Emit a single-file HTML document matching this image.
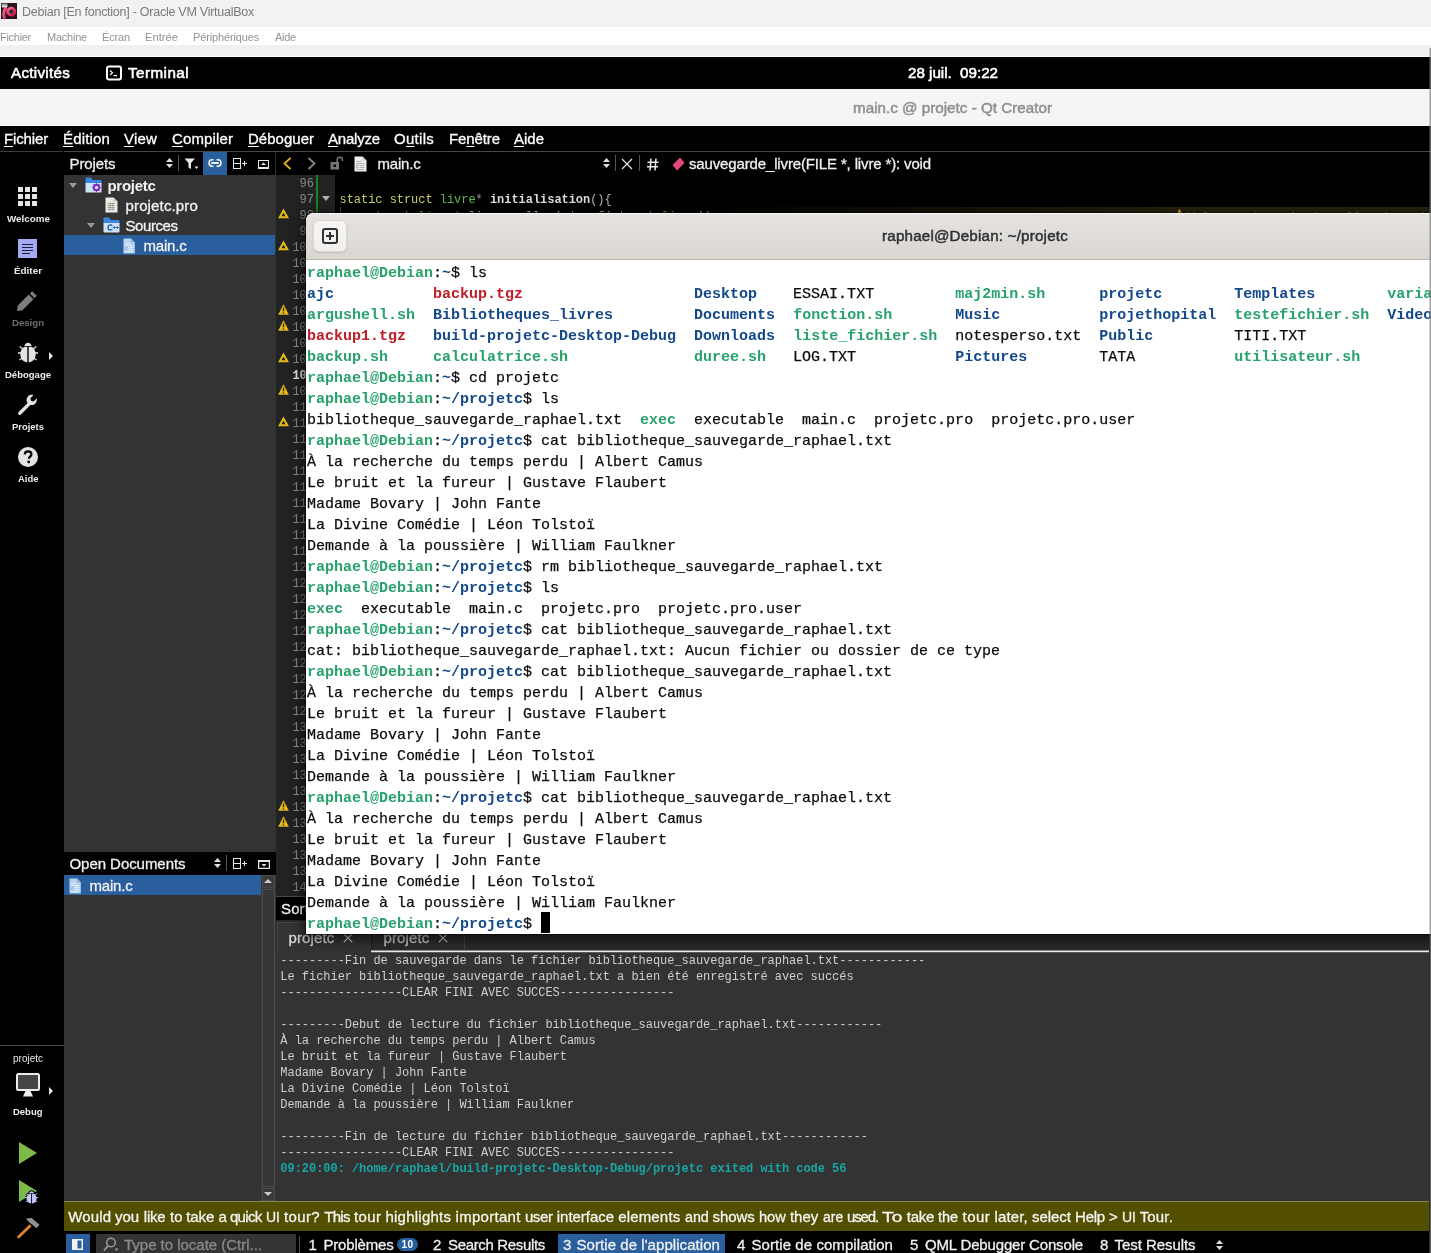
<!DOCTYPE html>
<html><head><meta charset="utf-8"><title>Debian [En fonction] - Oracle VM VirtualBox</title>
<style>
html,body{margin:0;padding:0;}
body{width:1431px;height:1253px;position:relative;overflow:hidden;background:#000;font-family:"Liberation Sans",sans-serif;}
#r{position:absolute;left:0;top:0;width:1431px;height:1253px;overflow:hidden;will-change:transform;}
#r div,#r svg,#r span.t,#r pre{position:absolute;}
span.t{white-space:pre;line-height:20px;height:20px;}
span.k{-webkit-text-stroke:0.3px;}
u{text-decoration:underline;text-underline-offset:2px;}
pre{margin:0;font-family:"Liberation Mono",monospace;white-space:pre;}
b{font-weight:bold;}
.g{color:#28a16c;font-weight:bold;-webkit-text-stroke:0;}
.b{color:#13488a;font-weight:bold;-webkit-text-stroke:0;}
.rd{color:#c01c28;font-weight:bold;-webkit-text-stroke:0;}
</style></head><body><div id="r">
<div style="left:0px;top:0px;width:1431px;height:27px;background:#f2f2f2;"></div>
<div style="left:0px;top:27px;width:1431px;height:18px;background:#ffffff;"></div>
<div style="left:0px;top:45px;width:1431px;height:11px;background:#f0f0f0;"></div>
<div style="left:0px;top:56px;width:1431px;height:1px;background:#ffffff;"></div>
<div style="left:0px;top:57px;width:1431px;height:32px;background:#000000;"></div>
<div style="left:0px;top:89px;width:1431px;height:37px;background:#f6f5f4;"></div>
<div style="left:0px;top:126px;width:1431px;height:1127px;background:#000000;"></div>
<svg style="left:1px;top:3px" width="16" height="16" viewBox="0 0 16 16">
<defs><linearGradient id="vb" x1="0" y1="0" x2="1" y2="1"><stop offset="0" stop-color="#f0708a"/><stop offset="1" stop-color="#d01048"/></linearGradient></defs>
<rect x="0" y="0" width="16" height="16" fill="#2a1420"/>
<path d="M5.500 4.500C2.500 7 2.200 12 3.800 15.500" fill="none" stroke="url(#vb)" stroke-width="3"/>
<circle cx="10.300" cy="8.600" r="3.500" fill="none" stroke="url(#vb)" stroke-width="2.800"/>
<circle cx="10.300" cy="8.600" r="1.600" fill="#3a2a40"/>
<rect x="0.800" y="0.800" width="5.500" height="3.600" fill="#e8e8e8"/><rect x="0.800" y="0.800" width="5.500" height="2" fill="#8a8a8a" opacity=".7"/>
</svg>
<span class="t" style="left:22px;top:2.0px;font-size:12.5px;color:#7a7a7a;letter-spacing:-0.255px;">Debian [En fonction] - Oracle VM VirtualBox</span>
<span class="t" style="left:0px;top:26.5px;font-size:11px;color:#939393;letter-spacing:-0.288px;">Fichier</span>
<span class="t" style="left:47px;top:26.5px;font-size:11px;color:#939393;letter-spacing:-0.225px;">Machine</span>
<span class="t" style="left:102px;top:26.5px;font-size:11px;color:#939393;letter-spacing:-0.150px;">Écran</span>
<span class="t" style="left:145px;top:26.5px;font-size:11px;color:#939393;letter-spacing:0.096px;">Entrée</span>
<span class="t" style="left:193px;top:26.5px;font-size:11px;color:#939393;letter-spacing:-0.144px;">Périphériques</span>
<span class="t" style="left:275px;top:26.5px;font-size:11px;color:#939393;letter-spacing:-0.258px;">Aide</span>
<span class="t" style="left:11px;top:62.5px;font-size:15.2px;color:#ffffff;letter-spacing:0.273px;-webkit-text-stroke:0.55px;">Activités</span>
<svg style="left:106px;top:65px" width="16" height="16" viewBox="0 0 16 16">
<rect x="1" y="1.500" width="14" height="13" rx="2" fill="none" stroke="#fff" stroke-width="2"/>
<path d="M4 5.500l2.500 2.300L4 10.100" fill="none" stroke="#fff" stroke-width="1.200"/><rect x="7.500" y="10" width="3.500" height="1.200" fill="#fff"/></svg>
<span class="t" style="left:128px;top:62.5px;font-size:15.2px;color:#ffffff;letter-spacing:0.451px;-webkit-text-stroke:0.55px;">Terminal</span>
<span class="t" style="left:908px;top:62.5px;font-size:15.2px;color:#ffffff;letter-spacing:-0.024px;-webkit-text-stroke:0.55px;">28 juil.  09:22</span>
<span class="t" style="left:853px;top:97.5px;font-size:15.2px;color:#909090;letter-spacing:0.015px;-webkit-text-stroke:0.5px;">main.c @ projetc - Qt Creator</span>
<span class="t k" style="left:4px;top:128.5px;font-size:15px;color:#ffffff;letter-spacing:-0.145px;"><u>F</u>ichier</span>
<span class="t k" style="left:63px;top:128.5px;font-size:15px;color:#ffffff;letter-spacing:0.161px;"><u>É</u>dition</span>
<span class="t k" style="left:124px;top:128.5px;font-size:15px;color:#ffffff;letter-spacing:0.188px;"><u>V</u>iew</span>
<span class="t k" style="left:172px;top:128.5px;font-size:15px;color:#ffffff;letter-spacing:0.123px;"><u>C</u>ompiler</span>
<span class="t k" style="left:248px;top:128.5px;font-size:15px;color:#ffffff;letter-spacing:0.014px;"><u>D</u>éboguer</span>
<span class="t k" style="left:328px;top:128.5px;font-size:15px;color:#ffffff;letter-spacing:-0.196px;"><u>A</u>nalyze</span>
<span class="t k" style="left:394px;top:128.5px;font-size:15px;color:#ffffff;letter-spacing:0.276px;">O<u>u</u>tils</span>
<span class="t k" style="left:449px;top:128.5px;font-size:15px;color:#ffffff;letter-spacing:-0.100px;">Fe<u>n</u>être</span>
<span class="t k" style="left:514px;top:128.5px;font-size:15px;color:#ffffff;letter-spacing:-0.008px;"><u>A</u>ide</span>
<svg style="left:18px;top:187px" width="19" height="19" viewBox="0 0 19 19"><rect x="0" y="0" width="5" height="5" fill="#e4e4e4"/><rect x="7" y="0" width="5" height="5" fill="#e4e4e4"/><rect x="14" y="0" width="5" height="5" fill="#e4e4e4"/><rect x="0" y="7" width="5" height="5" fill="#e4e4e4"/><rect x="7" y="7" width="5" height="5" fill="#e4e4e4"/><rect x="14" y="7" width="5" height="5" fill="#e4e4e4"/><rect x="0" y="14" width="5" height="5" fill="#e4e4e4"/><rect x="7" y="14" width="5" height="5" fill="#e4e4e4"/><rect x="14" y="14" width="5" height="5" fill="#e4e4e4"/></svg>
<span class="t" style="left:6.5px;top:209.3px;font-size:9.5px;color:#ececec;font-weight:bold;display:inline-block;transform-origin:0 50%;transform:scaleX(1.0350);">Welcome</span>
<svg style="left:18px;top:239px" width="19" height="19" viewBox="0 0 19 19"><rect width="19" height="19" fill="#a3aaf2"/>
<path d="M4 5.500h11M4 8.500h11M4 11.500h11M4 14.500h8" stroke="#1d1d3a" stroke-width="1.200" fill="none"/></svg>
<span class="t" style="left:14px;top:260.8px;font-size:9.5px;color:#ececec;font-weight:bold;display:inline-block;transform-origin:0 50%;transform:scaleX(1.0394);">Éditer</span>
<svg style="left:16px;top:290px" width="22" height="22" viewBox="0 0 22 22">
<path d="M16.2 1.200l4.600 4.600-2.400 2.400-4.600-4.600zM12.800 4.600l4.600 4.600L6.200 20.400 1 21l.6-5.200z" fill="#7d7d7d"/></svg>
<span class="t" style="left:12px;top:313.3px;font-size:9.5px;color:#6f6f6f;font-weight:bold;display:inline-block;transform-origin:0 50%;transform:scaleX(1.0099);">Design</span>
<svg style="left:16px;top:341px" width="24" height="22" viewBox="0 0 24 22">
<g stroke="#e4e4e4" stroke-width="1.300" fill="none"><path d="M3.500 5.500l3.500 2.500M20.500 5.500l-3.500 2.500M2 12h4M22 12h-4M3.500 19l3.500-2.500M20.500 19l-3.500-2.500"/></g>
<path d="M8.300 5c.4-2 1.900-3.300 3.700-3.300s3.300 1.300 3.700 3.300z" fill="#e4e4e4"/>
<path d="M11.300 5.800v15.600c-4.200-.5-7-3.600-7-8.100 0-3.300 1.600-6 4.200-7.500zM12.700 5.800v15.600c4.200-.5 7-3.600 7-8.100 0-3.300-1.600-6-4.200-7.500z" fill="#e4e4e4"/></svg>
<svg style="left:49px;top:352px" width="4" height="8" viewBox="0 0 4 8"><path d="M0 0l4 4-4 4z" fill="#e4e4e4"/></svg>
<span class="t" style="left:5px;top:365.3px;font-size:9.5px;color:#ececec;font-weight:bold;display:inline-block;transform-origin:0 50%;transform:scaleX(1.0014);">Débogage</span>
<svg style="left:17px;top:394px" width="22" height="22" viewBox="0 0 22 22">
<path d="M2.800 19.200L12.600 9.400" stroke="#e4e4e4" stroke-width="3.400" stroke-linecap="round" fill="none"/>
<path d="M19.800 4.300l-3.200 3.100-2.600-.6-.6-2.600 3.100-3.200c-2.200-.5-4.500.1-5.800 1.700-1.700 2-1.500 5 .3 6.900 1.900 1.900 4.900 2 6.900.3 1.600-1.300 2.400-3.500 1.900-5.600z" fill="#e4e4e4"/></svg>
<span class="t" style="left:12px;top:417.3px;font-size:9.5px;color:#ececec;font-weight:bold;display:inline-block;transform-origin:0 50%;transform:scaleX(0.9932);">Projets</span>
<svg style="left:18px;top:447px" width="20" height="20" viewBox="0 0 20 20"><circle cx="10" cy="10" r="10" fill="#e4e4e4"/>
<path d="M6.800 7.600c0-2 1.400-3.200 3.300-3.200 1.900 0 3.300 1.100 3.300 2.800 0 2.400-2.600 2.500-2.600 4.600" stroke="#000" stroke-width="2.200" fill="none"/><circle cx="10.700" cy="14.900" r="1.400" fill="#000"/></svg>
<span class="t" style="left:17.5px;top:469.3px;font-size:9.5px;color:#ececec;font-weight:bold;display:inline-block;transform-origin:0 50%;transform:scaleX(0.9954);">Aide</span>
<div style="left:0px;top:1045px;width:64px;height:1px;background:#4a4a4a;"></div>
<span class="t" style="left:12.5px;top:1048.7px;font-size:10px;color:#e8e8e8;display:inline-block;transform-origin:0 50%;transform:scaleX(0.9995);">projetc</span>
<svg style="left:16px;top:1073px" width="24" height="24" viewBox="0 0 24 24">
<rect x="1" y="1" width="22" height="16" rx="1.500" fill="#454545" stroke="#ececec" stroke-width="2"/>
<path d="M9.500 18h5l2.500 5.500h-10z" fill="#ececec"/></svg>
<svg style="left:49px;top:1087px" width="4" height="8" viewBox="0 0 4 8"><path d="M0 0l4 4-4 4z" fill="#e4e4e4"/></svg>
<span class="t" style="left:13px;top:1101.8px;font-size:9.5px;color:#ececec;font-weight:bold;display:inline-block;transform-origin:0 50%;transform:scaleX(0.9979);">Debug</span>
<svg style="left:19px;top:1142px" width="18" height="22" viewBox="0 0 18 22"><path d="M0 0l18 11L0 22z" fill="#7dba4a"/></svg>
<svg style="left:19px;top:1180px" width="20" height="24" viewBox="0 0 20 24"><path d="M0 0l18 11L0 22z" fill="#7dba4a"/>
<g transform="translate(4.800,10.200) scale(0.650,0.620)"><g stroke="#000" stroke-width="3.500" fill="#000"><path d="M3.500 5.500l3.500 2.500M20.500 5.500l-3.500 2.500M2 12h4M22 12h-4M3.500 19l3.500-2.500M20.500 19l-3.500-2.500"/><path d="M8.300 5c.4-2 1.900-3.300 3.700-3.300s3.300 1.300 3.700 3.300zM5 13a7 8 0 0 0 14 0a7 8 0 0 0-14 0z"/></g>
<g stroke="#c0c8ff" stroke-width="1.500" fill="none"><path d="M3.500 5.500l3.500 2.500M20.500 5.500l-3.500 2.500M2 12h4M22 12h-4M3.500 19l3.500-2.500M20.500 19l-3.500-2.500"/></g>
<path d="M8.300 5c.4-2 1.900-3.300 3.700-3.300s3.300 1.300 3.700 3.300z" fill="#c0c8ff"/>
<path d="M11.300 5.800v15.600c-4.200-.5-7-3.600-7-8.100 0-3.300 1.600-6 4.200-7.500zM12.700 5.800v15.600c4.200-.5 7-3.600 7-8.100 0-3.300-1.600-6-4.200-7.500z" fill="#c0c8ff"/></g></svg>
<svg style="left:16px;top:1216px" width="26" height="26" viewBox="0 0 26 26">
<path d="M1.800 21.800L14.600 9.300" stroke="#e8872c" stroke-width="2.600" fill="none"/>
<path d="M9.900 2.600L15.600 1.900L23.500 8.800L20.600 12.200L12.700 5.800z" fill="#929292"/></svg>
<div style="left:0px;top:151px;width:63px;height:1px;background:#3a3a3a;"></div>
<div style="left:64px;top:151px;width:1367px;height:1px;background:#464646;"></div>
<div style="left:64px;top:175px;width:212px;height:677px;background:#333333;"></div>
<div style="left:64px;top:875px;width:212px;height:326px;background:#333333;"></div>
<span class="t k" style="left:69.5px;top:153.5px;font-size:15px;color:#f0f0f0;letter-spacing:-0.098px;">Projets</span>
<svg style="left:166px;top:158px" width="7" height="10" viewBox="0 0 7 10"><path d="M3.500 0L7 4H0zM3.500 10L7 6H0z" fill="#e0e0e0"/></svg>
<div style="left:178px;top:155px;width:1px;height:16px;background:#555555;"></div>
<svg style="left:184px;top:158px" width="15" height="12" viewBox="0 0 15 12"><path d="M0.500 0.500h10.500L7 5v6L4.500 9.500V5z" fill="#e8e8e8"/><path d="M10.500 8.500h4l-2 2.500z" fill="#e8e8e8"/></svg>
<div style="left:203px;top:152px;width:24px;height:23px;background:#2a5f9e;"></div>
<svg style="left:208px;top:159px" width="14" height="8" viewBox="0 0 14 8"><g fill="none" stroke="#f2f2f2">
<path d="M5.500 0.800H4.200a3.200 3.200 0 0 0 0 6.400H5.500M8.500 0.800H9.800a3.200 3.200 0 0 1 0 6.400H8.500" stroke-width="1.500"/><path d="M3.300 4h7.400" stroke-width="2"/></g></svg>
<svg style="left:233px;top:158px" width="15" height="12" viewBox="0 0 15 12"><g fill="none" stroke="#e8e8e8" stroke-width="1">
<rect x="0.500" y="0.500" width="7" height="10"/><path d="M0.500 5.500h7M11.500 3v5M9 5.500h5"/></g></svg>
<svg style="left:258px;top:160px" width="11" height="9" viewBox="0 0 11 9"><rect x="0.500" y="0.500" width="10" height="8" fill="none" stroke="#e8e8e8" stroke-width="1"/><rect x="0" y="7" width="11" height="2" fill="#e8e8e8"/><path d="M3 5l2.500-2.500L8 5z" fill="#e8e8e8"/></svg>
<div style="left:275px;top:152px;width:1px;height:23px;background:#2e2e2e;"></div>
<svg style="left:69px;top:183px" width="8" height="5" viewBox="0 0 8 5"><path d="M0 0h8L4 5z" fill="#9a9a9a"/></svg>
<svg style="left:85px;top:177px" width="17" height="16" viewBox="0 0 17 16">
<path d="M0.500 1.500c0-.6.400-1 1-1h4.500l1.500 2.500h8c.6 0 1 .4 1 1V7H0.500z" fill="#3d86e0"/>
<path d="M0.500 6h16v8.500c0 .6-.4 1-1 1h-14c-.6 0-1-.4-1-1z" fill="#cfe3f7"/>
<circle cx="11.500" cy="10.500" r="2.600" fill="none" stroke="#7a18c2" stroke-width="1.600"/>
<g stroke="#7a18c2" stroke-width="1.300"><path d="M11.500 6.300v1.400M11.500 13.300v1.400M7.300 10.500h1.400M14.300 10.500h1.400M8.500 7.500l1 1M13.500 12.500l1 1M14.500 7.500l-1 1M8.500 13.500l1-1"/></g></svg>
<span class="t" style="left:107.5px;top:176.0px;font-size:15px;color:#f2f2f2;font-weight:bold;letter-spacing:-0.288px;">projetc</span>
<svg style="left:105px;top:197px" width="13" height="16" viewBox="0 0 13 16">
<path d="M0.500 0.500h8l4 4v11h-12z" fill="#ecebe6"/><path d="M8.500 0.500v4h4z" fill="#c9c8c2"/>
<g stroke="#9a9a94" stroke-width="0.900" fill="none"><path d="M2.500 6.500h7M2.500 8.500h7M2.500 10.500h7M2.500 12.500h7M5 5.500v8M8 5.500v8"/></g></svg>
<span class="t k" style="left:125.5px;top:196.0px;font-size:15px;color:#f2f2f2;letter-spacing:0.148px;">projetc.pro</span>
<svg style="left:87px;top:223px" width="8" height="5" viewBox="0 0 8 5"><path d="M0 0h8L4 5z" fill="#9a9a9a"/></svg>
<svg style="left:103px;top:217px" width="17" height="16" viewBox="0 0 17 16">
<path d="M0.500 1.500c0-.6.400-1 1-1h4.500l1.500 2.500h8c.6 0 1 .4 1 1V7H0.500z" fill="#3d86e0"/>
<path d="M0.500 6h16v8.500c0 .6-.4 1-1 1h-14c-.6 0-1-.4-1-1z" fill="#cfe3f7"/>
<path d="M9.300 8.800c-.5-.6-1.100-.9-1.900-.9-1.400 0-2.400 1-2.400 2.600s1 2.600 2.400 2.600c.8 0 1.400-.3 1.900-.9" fill="none" stroke="#1b5fae" stroke-width="1.300"/>
<path d="M10 10.500h2.600M11.300 9.200v2.600M13.100 10.500h2.600M14.400 9.200v2.600" stroke="#1b5fae" stroke-width="1"/></svg>
<span class="t k" style="left:125.5px;top:216.0px;font-size:15px;color:#f2f2f2;letter-spacing:-0.433px;">Sources</span>
<div style="left:64px;top:235px;width:211px;height:20px;background:#2a5f9e;"></div>
<svg style="left:123px;top:237.5px" width="12.300" height="16" viewBox="0 0 13 16" preserveAspectRatio="none">
<path d="M0.500 0.500h8l4 4v11h-12z" fill="#b9d2ee"/><path d="M8.500 0.500v4h4z" fill="#8fb2da"/>
<g stroke="#dcebfa" stroke-width="1" fill="none"><path d="M2.500 5.500h5M2.500 7.500h8M5.500 9.500h5M5.500 11.500h5M2.500 13.500h8"/></g>
<path d="M4.600 9.300c-.3-.3-.6-.4-1-.4-.7 0-1.200.6-1.200 1.500s.5 1.500 1.200 1.500c.4 0 .7-.1 1-.4" stroke="#7fa6d6" stroke-width="0.900" fill="none"/></svg>
<span class="t k" style="left:143.5px;top:236.0px;font-size:15px;color:#f2f2f2;letter-spacing:-0.198px;">main.c</span>
<div style="left:64px;top:852px;width:211px;height:23px;background:#000000;"></div>
<span class="t k" style="left:69.5px;top:853.5px;font-size:15px;color:#f0f0f0;letter-spacing:-0.052px;">Open Documents</span>
<svg style="left:214px;top:858px" width="7" height="10" viewBox="0 0 7 10"><path d="M3.500 0L7 4H0zM3.500 10L7 6H0z" fill="#e0e0e0"/></svg>
<div style="left:226px;top:855px;width:1px;height:16px;background:#555555;"></div>
<svg style="left:233px;top:858px" width="15" height="12" viewBox="0 0 15 12"><g fill="none" stroke="#e8e8e8" stroke-width="1">
<rect x="0.500" y="0.500" width="7" height="10"/><path d="M0.500 5.500h7M11.500 3v5M9 5.500h5"/></g></svg>
<svg style="left:258px;top:860px" width="12" height="9" viewBox="0 0 12 9"><rect x="0.600" y="0.600" width="10.800" height="7.800" fill="none" stroke="#e8e8e8" stroke-width="1.200"/><rect x="0" y="0" width="12" height="2" fill="#e8e8e8"/><path d="M3.500 4l2.500 2.500 2.500-2.500z" fill="#e8e8e8"/></svg>
<div style="left:64px;top:875px;width:197px;height:20px;background:#2a5f9e;"></div>
<svg style="left:69px;top:877.5px" width="12.300" height="16" viewBox="0 0 13 16" preserveAspectRatio="none">
<path d="M0.500 0.500h8l4 4v11h-12z" fill="#b9d2ee"/><path d="M8.500 0.500v4h4z" fill="#8fb2da"/>
<g stroke="#dcebfa" stroke-width="1" fill="none"><path d="M2.500 5.500h5M2.500 7.500h8M5.500 9.500h5M5.500 11.500h5M2.500 13.500h8"/></g>
<path d="M4.600 9.300c-.3-.3-.6-.4-1-.4-.7 0-1.200.6-1.200 1.500s.5 1.500 1.200 1.500c.4 0 .7-.1 1-.4" stroke="#7fa6d6" stroke-width="0.900" fill="none"/></svg>
<span class="t k" style="left:89.5px;top:876.0px;font-size:15px;color:#f2f2f2;letter-spacing:-0.198px;">main.c</span>
<div style="left:261px;top:875px;width:14px;height:326px;background:#383838;"></div>
<div style="left:262px;top:875px;width:13px;height:13px;background:#3a3a3a;border:1px solid #4a4a4a;box-sizing:border-box;"></div>
<div style="left:262px;top:889px;width:13px;height:298px;background:#363636;border:1px solid #4c4c4c;box-sizing:border-box;"></div>
<div style="left:262px;top:1188px;width:13px;height:13px;background:#3a3a3a;border:1px solid #4a4a4a;box-sizing:border-box;"></div>
<svg style="left:264px;top:879px" width="8" height="4" viewBox="0 0 8 4"><path d="M0 4h8L4 0z" fill="#c8c8c8"/></svg>
<svg style="left:264px;top:1192px" width="8" height="4" viewBox="0 0 8 4"><path d="M0 0h8L4 4z" fill="#c8c8c8"/></svg>
<svg style="left:283px;top:157px" width="9" height="13" viewBox="0 0 9 13"><path d="M7.500 1L1.500 6.500l6 5.500" fill="none" stroke="#e6b422" stroke-width="1.700"/></svg>
<svg style="left:307px;top:157px" width="9" height="13" viewBox="0 0 9 13"><path d="M1.500 1l6 5.500-6 5.500" fill="none" stroke="#8a8a8a" stroke-width="1.700"/></svg>
<svg style="left:330px;top:156px" width="14" height="14" viewBox="0 0 14 14"><rect x="0.500" y="6" width="8.500" height="7.500" fill="#777"/>
<path d="M7.200 6V3.800a2.600 2.600 0 0 1 5.200 0V5" fill="none" stroke="#777" stroke-width="1.500"/><rect x="3.500" y="8.500" width="2.500" height="2.500" fill="#000"/></svg>
<svg style="left:353.500px;top:155.500px" width="13" height="16" viewBox="0 0 13 16">
<path d="M0.500 0.500h8l4 4v11h-12z" fill="#f0f0f0"/><path d="M8.500 0.500v4h4z" fill="#c8c8c8"/>
<g stroke="#b0b0b0" stroke-width="1" fill="none"><path d="M2.500 5.500h5M2.500 7.500h8M5.500 9.500h5M5.500 11.500h5M2.500 13.500h8"/></g>
<path d="M4.600 9.300c-.3-.3-.6-.4-1-.4-.7 0-1.200.6-1.200 1.500s.5 1.500 1.200 1.500c.4 0 .7-.1 1-.4" stroke="#888" stroke-width="0.900" fill="none"/></svg>
<span class="t k" style="left:377.5px;top:153.5px;font-size:15px;color:#f0f0f0;letter-spacing:-0.198px;">main.c</span>
<svg style="left:603px;top:158px" width="7" height="10" viewBox="0 0 7 10"><path d="M3.500 0L7 4H0zM3.500 10L7 6H0z" fill="#e0e0e0"/></svg>
<div style="left:615px;top:155px;width:1px;height:16px;background:#555555;"></div>
<svg style="left:621px;top:158px" width="12" height="12" viewBox="0 0 12 12"><path d="M1 1l10 10M11 1L1 11" stroke="#e0e0e0" stroke-width="1.300"/></svg>
<div style="left:639px;top:155px;width:1px;height:16px;background:#555555;"></div>
<svg style="left:647px;top:157.500px" width="12" height="13" viewBox="0 0 12 13"><path d="M4 0.500L3 12.500M9 0.500L8 12.500M0.500 4.200h11M0 8.800h11" stroke="#e8e8e8" stroke-width="1.500" fill="none"/></svg>
<svg style="left:672px;top:157px" width="13" height="14" viewBox="0 0 13 14"><path d="M8 0.500l4.500 5.500-7.500 7.500L0.500 8z" fill="#df4a7e"/></svg>
<span class="t k" style="left:689px;top:153.5px;font-size:15px;color:#f0f0f0;letter-spacing:-0.144px;">sauvegarde_livre(FILE *, livre *): void</span>
<div style="left:276px;top:175px;width:59px;height:721px;background:#222222;"></div>
<div style="left:276px;top:896px;width:1153px;height:1px;background:#4a4a4a;"></div>
<div style="left:316px;top:175px;width:2px;height:722px;background:#148a14;"></div>
<span class="t" style="left:299.6px;top:173.5px;font-size:12px;color:#868686;font-family:'Liberation Mono',monospace;">96</span>
<span class="t" style="left:299.6px;top:189.5px;font-size:12px;color:#868686;font-family:'Liberation Mono',monospace;">97</span>
<span class="t" style="left:299.6px;top:205.5px;font-size:12px;color:#868686;font-family:'Liberation Mono',monospace;">98</span>
<span class="t" style="left:299.6px;top:221.5px;font-size:12px;color:#868686;font-family:'Liberation Mono',monospace;">99</span>
<span class="t" style="left:292.4px;top:237.5px;font-size:12px;color:#868686;font-family:'Liberation Mono',monospace;">100</span>
<span class="t" style="left:292.4px;top:253.5px;font-size:12px;color:#868686;font-family:'Liberation Mono',monospace;">101</span>
<span class="t" style="left:292.4px;top:269.5px;font-size:12px;color:#868686;font-family:'Liberation Mono',monospace;">102</span>
<span class="t" style="left:292.4px;top:285.5px;font-size:12px;color:#868686;font-family:'Liberation Mono',monospace;">103</span>
<span class="t" style="left:292.4px;top:301.5px;font-size:12px;color:#868686;font-family:'Liberation Mono',monospace;">104</span>
<span class="t" style="left:292.4px;top:317.5px;font-size:12px;color:#868686;font-family:'Liberation Mono',monospace;">105</span>
<span class="t" style="left:292.4px;top:333.5px;font-size:12px;color:#868686;font-family:'Liberation Mono',monospace;">106</span>
<span class="t" style="left:292.4px;top:349.5px;font-size:12px;color:#868686;font-family:'Liberation Mono',monospace;">107</span>
<span class="t" style="left:292.4px;top:365.5px;font-size:12px;color:#e0e0e0;font-weight:bold;font-family:'Liberation Mono',monospace;">108</span>
<span class="t" style="left:292.4px;top:381.5px;font-size:12px;color:#868686;font-family:'Liberation Mono',monospace;">109</span>
<span class="t" style="left:292.4px;top:397.5px;font-size:12px;color:#868686;font-family:'Liberation Mono',monospace;">110</span>
<span class="t" style="left:292.4px;top:413.5px;font-size:12px;color:#868686;font-family:'Liberation Mono',monospace;">111</span>
<span class="t" style="left:292.4px;top:429.5px;font-size:12px;color:#868686;font-family:'Liberation Mono',monospace;">112</span>
<span class="t" style="left:292.4px;top:445.5px;font-size:12px;color:#868686;font-family:'Liberation Mono',monospace;">113</span>
<span class="t" style="left:292.4px;top:461.5px;font-size:12px;color:#868686;font-family:'Liberation Mono',monospace;">114</span>
<span class="t" style="left:292.4px;top:477.5px;font-size:12px;color:#868686;font-family:'Liberation Mono',monospace;">115</span>
<span class="t" style="left:292.4px;top:493.5px;font-size:12px;color:#868686;font-family:'Liberation Mono',monospace;">116</span>
<span class="t" style="left:292.4px;top:509.5px;font-size:12px;color:#868686;font-family:'Liberation Mono',monospace;">117</span>
<span class="t" style="left:292.4px;top:525.5px;font-size:12px;color:#868686;font-family:'Liberation Mono',monospace;">118</span>
<span class="t" style="left:292.4px;top:541.5px;font-size:12px;color:#868686;font-family:'Liberation Mono',monospace;">119</span>
<span class="t" style="left:292.4px;top:557.5px;font-size:12px;color:#868686;font-family:'Liberation Mono',monospace;">120</span>
<span class="t" style="left:292.4px;top:573.5px;font-size:12px;color:#868686;font-family:'Liberation Mono',monospace;">121</span>
<span class="t" style="left:292.4px;top:589.5px;font-size:12px;color:#868686;font-family:'Liberation Mono',monospace;">122</span>
<span class="t" style="left:292.4px;top:605.5px;font-size:12px;color:#868686;font-family:'Liberation Mono',monospace;">123</span>
<span class="t" style="left:292.4px;top:621.5px;font-size:12px;color:#868686;font-family:'Liberation Mono',monospace;">124</span>
<span class="t" style="left:292.4px;top:637.5px;font-size:12px;color:#868686;font-family:'Liberation Mono',monospace;">125</span>
<span class="t" style="left:292.4px;top:653.5px;font-size:12px;color:#868686;font-family:'Liberation Mono',monospace;">126</span>
<span class="t" style="left:292.4px;top:669.5px;font-size:12px;color:#868686;font-family:'Liberation Mono',monospace;">127</span>
<span class="t" style="left:292.4px;top:685.5px;font-size:12px;color:#868686;font-family:'Liberation Mono',monospace;">128</span>
<span class="t" style="left:292.4px;top:701.5px;font-size:12px;color:#868686;font-family:'Liberation Mono',monospace;">129</span>
<span class="t" style="left:292.4px;top:717.5px;font-size:12px;color:#868686;font-family:'Liberation Mono',monospace;">130</span>
<span class="t" style="left:292.4px;top:733.5px;font-size:12px;color:#868686;font-family:'Liberation Mono',monospace;">131</span>
<span class="t" style="left:292.4px;top:749.5px;font-size:12px;color:#868686;font-family:'Liberation Mono',monospace;">132</span>
<span class="t" style="left:292.4px;top:765.5px;font-size:12px;color:#868686;font-family:'Liberation Mono',monospace;">133</span>
<span class="t" style="left:292.4px;top:781.5px;font-size:12px;color:#868686;font-family:'Liberation Mono',monospace;">134</span>
<span class="t" style="left:292.4px;top:797.5px;font-size:12px;color:#868686;font-family:'Liberation Mono',monospace;">135</span>
<span class="t" style="left:292.4px;top:813.5px;font-size:12px;color:#868686;font-family:'Liberation Mono',monospace;">136</span>
<span class="t" style="left:292.4px;top:829.5px;font-size:12px;color:#868686;font-family:'Liberation Mono',monospace;">137</span>
<span class="t" style="left:292.4px;top:845.5px;font-size:12px;color:#868686;font-family:'Liberation Mono',monospace;">138</span>
<span class="t" style="left:292.4px;top:861.5px;font-size:12px;color:#868686;font-family:'Liberation Mono',monospace;">139</span>
<span class="t" style="left:292.4px;top:877.5px;font-size:12px;color:#868686;font-family:'Liberation Mono',monospace;">140</span>
<svg style="left:277.5px;top:208.3px" width="11" height="11" viewBox="0 0 13 13"><path d="M6.500 3L11 11H2z" fill="none" stroke="#e6b91e" stroke-width="2.500" stroke-linejoin="miter"/></svg>
<svg style="left:277.5px;top:240.3px" width="11" height="11" viewBox="0 0 13 13"><path d="M6.500 3L11 11H2z" fill="none" stroke="#e6b91e" stroke-width="2.500" stroke-linejoin="miter"/></svg>
<svg style="left:277.5px;top:304.3px" width="11" height="11" viewBox="0 0 13 12" preserveAspectRatio="none"><path d="M6.500 0.300L12.800 11.700H0.200z" fill="#e6b91e"/><path d="M6.500 3.800v4.200" stroke="#2a2200" stroke-width="1.500"/><circle cx="6.500" cy="9.800" r="0.900" fill="#2a2200"/></svg>
<svg style="left:277.5px;top:320.3px" width="11" height="11" viewBox="0 0 13 12" preserveAspectRatio="none"><path d="M6.500 0.300L12.800 11.700H0.200z" fill="#e6b91e"/><path d="M6.500 3.800v4.200" stroke="#2a2200" stroke-width="1.500"/><circle cx="6.500" cy="9.800" r="0.900" fill="#2a2200"/></svg>
<svg style="left:277.5px;top:352.3px" width="11" height="11" viewBox="0 0 13 13"><path d="M6.500 3L11 11H2z" fill="none" stroke="#e6b91e" stroke-width="2.500" stroke-linejoin="miter"/></svg>
<svg style="left:277.5px;top:384.3px" width="11" height="11" viewBox="0 0 13 12" preserveAspectRatio="none"><path d="M6.500 0.300L12.800 11.700H0.200z" fill="#e6b91e"/><path d="M6.500 3.800v4.200" stroke="#2a2200" stroke-width="1.500"/><circle cx="6.500" cy="9.800" r="0.900" fill="#2a2200"/></svg>
<svg style="left:277.5px;top:416.3px" width="11" height="11" viewBox="0 0 13 13"><path d="M6.500 3L11 11H2z" fill="none" stroke="#e6b91e" stroke-width="2.500" stroke-linejoin="miter"/></svg>
<svg style="left:277.5px;top:800.3px" width="11" height="11" viewBox="0 0 13 12" preserveAspectRatio="none"><path d="M6.500 0.300L12.800 11.700H0.200z" fill="#e6b91e"/><path d="M6.500 3.800v4.200" stroke="#2a2200" stroke-width="1.500"/><circle cx="6.500" cy="9.800" r="0.900" fill="#2a2200"/></svg>
<svg style="left:277.5px;top:816.3px" width="11" height="11" viewBox="0 0 13 12" preserveAspectRatio="none"><path d="M6.500 0.300L12.800 11.700H0.200z" fill="#e6b91e"/><path d="M6.500 3.800v4.200" stroke="#2a2200" stroke-width="1.500"/><circle cx="6.500" cy="9.800" r="0.900" fill="#2a2200"/></svg>
<svg style="left:322px;top:196px" width="8" height="5" viewBox="0 0 8 5"><path d="M0 0h8L4 5z" fill="#b0b0b0"/></svg>
<pre style="left:339.500px;top:192px;font-size:12px;line-height:16px;letter-spacing:-0.040px;color:#b4b4b4"><span style="color:#cdcd6c">static struct</span> <span style="color:#5dbb4c">livre</span><span style="color:#9a9a9a">*</span> <b style="color:#dadada">initialisation</b>(){</pre>
<div style="left:700px;top:207px;width:729px;height:10px;background:linear-gradient(90deg,rgba(42,36,14,0) 0,#2a240e 480px)"></div>
<div style="left:340px;top:207px;width:1px;height:8px;background:#4a4a4a;"></div>
<pre style="left:339.500px;top:209px;font-size:12px;line-height:16px;letter-spacing:-0.040px;color:#c8c8c8">    <span style="color:#cdcd6c">struct</span> <span style="color:#5dbb4c">livre</span><span style="color:#9a9a9a">*</span> liv = malloc(<span style="color:#cdcd6c">sizeof</span>(<span style="color:#cdcd6c">struct</span> <span style="color:#5dbb4c">livre</span>));</pre>
<svg style="left:1175px;top:209px" width="9" height="8" viewBox="0 0 9 8"><path d="M4.500 0L9 8H0z" fill="#e6b91e"/></svg>
<pre style="left:1188px;top:209.500px;font-size:12px;line-height:16px;color:#b9a860">Valeur retournée de malloc ignorée</pre>
<div style="left:276px;top:897px;width:1153px;height:23px;background:#000000;"></div>
<span class="t k" style="left:281px;top:898.5px;font-size:15px;color:#f0f0f0;letter-spacing:0.125px;">Sortie de l'application</span>
<div style="left:276px;top:920px;width:1153px;height:32px;background:#2a2a2a;"></div>
<div style="left:277px;top:922px;width:94px;height:30px;background:#333333;border-top:1px solid #444;border-left:1px solid #444;box-sizing:border-box;"></div>
<div style="left:371px;top:922px;width:94px;height:29px;background:#2c2c2c;border-left:1px solid #1c1c1c;border-right:1px solid #404040;box-sizing:border-box;"></div>
<div style="left:371px;top:950px;width:1058px;height:1px;background:#8c8c8c;"></div>
<div style="left:371px;top:951px;width:1058px;height:1px;background:#e8e8e8;"></div>
<div style="left:371px;top:952px;width:1058px;height:1px;background:#5a5a5a;"></div>
<span class="t k" style="left:288.5px;top:927.8px;font-size:15px;color:#dcdcdc;letter-spacing:0.138px;">projetc</span>
<svg style="left:342.5px;top:933.3px" width="10" height="10" viewBox="0 0 10 10"><path d="M0.800 0.800l8.400 8.400M9.200 0.800L0.800 9.200" stroke="#dcdcdc" stroke-width="1.200"/></svg>
<span class="t k" style="left:383.5px;top:927.8px;font-size:15px;color:#cccccc;letter-spacing:0.138px;">projetc</span>
<svg style="left:437.5px;top:933.3px" width="10" height="10" viewBox="0 0 10 10"><path d="M0.800 0.800l8.400 8.400M9.200 0.800L0.800 9.200" stroke="#cccccc" stroke-width="1.200"/></svg>
<div style="left:276px;top:952px;width:1153px;height:249px;background:#333333;"></div>
<div style="left:371px;top:952px;width:1058px;height:1px;background:#5c5c5c;"></div>
<pre style="left:280.300px;top:953px;font-size:12px;line-height:16px;letter-spacing:-0.035px;color:#cfcfcf">---------Fin de sauvegarde dans le fichier bibliotheque_sauvegarde_raphael.txt------------
Le fichier bibliotheque_sauvegarde_raphael.txt a bien été enregistré avec succés
-----------------CLEAR FINI AVEC SUCCES----------------

---------Debut de lecture du fichier bibliotheque_sauvegarde_raphael.txt------------
À la recherche du temps perdu | Albert Camus
Le bruit et la fureur | Gustave Flaubert
Madame Bovary | John Fante
La Divine Comédie | Léon Tolstoï
Demande à la poussière | William Faulkner

---------Fin de lecture du fichier bibliotheque_sauvegarde_raphael.txt------------
-----------------CLEAR FINI AVEC SUCCES----------------
<b style="color:#17a5a5">09:20:00: /home/raphael/build-projetc-Desktop-Debug/projetc exited with code 56</b>
</pre>
<svg style="left:263px;top:1190px" width="0" height="0"></svg>
<div style="left:64px;top:1201px;width:1365px;height:30px;background:#524f00;border-top:1px solid #87844a;box-sizing:border-box;"></div>
<span class="t k" style="left:68.2px;top:1206.5px;font-size:15px;color:#f4f4f4;letter-spacing:0.150px;">Would</span>
<span class="t k" style="left:115.4px;top:1206.5px;font-size:15px;color:#f4f4f4;display:inline-block;transform-origin:0 50%;transform:scaleX(1.0005);">you</span>
<span class="t k" style="left:143.8px;top:1206.5px;font-size:15px;color:#f4f4f4;letter-spacing:-0.229px;">like</span>
<span class="t k" style="left:169.6px;top:1206.5px;font-size:15px;color:#f4f4f4;display:inline-block;transform-origin:0 50%;transform:scaleX(0.9908);">to</span>
<span class="t k" style="left:186.2px;top:1206.5px;font-size:15px;color:#f4f4f4;letter-spacing:-0.065px;">take</span>
<span class="t k" style="left:218.5px;top:1206.5px;font-size:15px;color:#f4f4f4;">a</span>
<span class="t k" style="left:229.9px;top:1206.5px;font-size:15px;color:#f4f4f4;letter-spacing:-0.646px;">quick</span>
<span class="t k" style="left:265.9px;top:1206.5px;font-size:15px;color:#f4f4f4;display:inline-block;transform-origin:0 50%;transform:scaleX(0.9333);">UI</span>
<span class="t k" style="left:284.1px;top:1206.5px;font-size:15px;color:#f4f4f4;letter-spacing:0.339px;">tour?</span>
<span class="t k" style="left:324.2px;top:1206.5px;font-size:15px;color:#f4f4f4;letter-spacing:-0.661px;">This</span>
<span class="t k" style="left:354.1px;top:1206.5px;font-size:15px;color:#f4f4f4;letter-spacing:0.310px;">tour</span>
<span class="t k" style="left:385.4px;top:1206.5px;font-size:15px;color:#f4f4f4;letter-spacing:0.251px;">highlights</span>
<span class="t k" style="left:455.5px;top:1206.5px;font-size:15px;color:#f4f4f4;letter-spacing:0.297px;">important</span>
<span class="t k" style="left:524.9px;top:1206.5px;font-size:15px;color:#f4f4f4;letter-spacing:-0.372px;">user</span>
<span class="t k" style="left:556.8px;top:1206.5px;font-size:15px;color:#f4f4f4;letter-spacing:-0.039px;">interface</span>
<span class="t k" style="left:618.2px;top:1206.5px;font-size:15px;color:#f4f4f4;letter-spacing:0.166px;">elements</span>
<span class="t k" style="left:684.6px;top:1206.5px;font-size:15px;color:#f4f4f4;display:inline-block;transform-origin:0 50%;transform:scaleX(0.9508);">and</span>
<span class="t k" style="left:712.6px;top:1206.5px;font-size:15px;color:#f4f4f4;letter-spacing:-0.086px;">shows</span>
<span class="t k" style="left:758.9px;top:1206.5px;font-size:15px;color:#f4f4f4;display:inline-block;transform-origin:0 50%;transform:scaleX(0.9734);">how</span>
<span class="t k" style="left:789.9px;top:1206.5px;font-size:15px;color:#f4f4f4;letter-spacing:0.010px;">they</span>
<span class="t k" style="left:822.5px;top:1206.5px;font-size:15px;color:#f4f4f4;display:inline-block;transform-origin:0 50%;transform:scaleX(0.9360);">are</span>
<span class="t k" style="left:847px;top:1206.5px;font-size:15px;color:#f4f4f4;letter-spacing:-1.141px;">used.</span>
<span class="t k" style="left:882.2px;top:1206.5px;font-size:15px;color:#f4f4f4;display:inline-block;transform-origin:0 50%;transform:scaleX(1.2876);">To</span>
<span class="t k" style="left:906.8px;top:1206.5px;font-size:15px;color:#f4f4f4;letter-spacing:-0.290px;">take</span>
<span class="t k" style="left:938.2px;top:1206.5px;font-size:15px;color:#f4f4f4;display:inline-block;transform-origin:0 50%;transform:scaleX(0.9684);">the</span>
<span class="t k" style="left:962.6px;top:1206.5px;font-size:15px;color:#f4f4f4;letter-spacing:0.460px;">tour</span>
<span class="t k" style="left:994.5px;top:1206.5px;font-size:15px;color:#f4f4f4;letter-spacing:0.145px;">later,</span>
<span class="t k" style="left:1032.1px;top:1206.5px;font-size:15px;color:#f4f4f4;letter-spacing:-0.065px;">select</span>
<span class="t k" style="left:1075.1px;top:1206.5px;font-size:15px;color:#f4f4f4;letter-spacing:-0.290px;">Help</span>
<span class="t k" style="left:1109px;top:1206.5px;font-size:15px;color:#f4f4f4;">&gt;</span>
<span class="t k" style="left:1121.5px;top:1206.5px;font-size:15px;color:#f4f4f4;display:inline-block;transform-origin:0 50%;transform:scaleX(0.9333);">UI</span>
<span class="t k" style="left:1139.7px;top:1206.5px;font-size:15px;color:#f4f4f4;letter-spacing:0.154px;">Tour.</span>
<div style="left:66px;top:1234px;width:24px;height:19px;background:#2a5f9e;"></div>
<svg style="left:72px;top:1239px" width="11" height="11" viewBox="0 0 11 11"><rect x="0.750" y="0.750" width="9.500" height="9.500" fill="none" stroke="#f2f2f2" stroke-width="1.500"/><rect x="1" y="1" width="4.500" height="9" fill="#f2f2f2"/></svg>
<div style="left:299px;top:1236px;width:1px;height:17px;background:#4a4a4a;"></div>
<div style="left:96px;top:1234px;width:200px;height:19px;background:#343434;"></div>
<svg style="left:103px;top:1237px" width="17" height="15" viewBox="0 0 17 15"><circle cx="8" cy="5.500" r="4.300" fill="none" stroke="#9a9a9a" stroke-width="1.500"/><path d="M5 8.800L1 13.500" stroke="#9a9a9a" stroke-width="1.800"/><path d="M11.500 11.500h4l-2 2.500z" fill="#9a9a9a"/></svg>
<span class="t k" style="left:124px;top:1235.2px;font-size:15px;color:#8a8a8a;letter-spacing:-0.017px;">Type to locate (Ctrl...</span>
<div style="left:558px;top:1234px;width:167px;height:19px;background:#2a5f9e;"></div>
<span class="t k" style="left:308.5px;top:1235.2px;font-size:15px;color:#f0f0f0;">1</span>
<span class="t k" style="left:323.5px;top:1235.2px;font-size:15px;color:#f0f0f0;letter-spacing:-0.189px;">Problèmes</span>
<span class="t k" style="left:433px;top:1235.2px;font-size:15px;color:#f0f0f0;">2</span>
<span class="t k" style="left:448px;top:1235.2px;font-size:15px;color:#f0f0f0;letter-spacing:-0.337px;">Search Results</span>
<span class="t k" style="left:563px;top:1235.2px;font-size:15px;color:#f0f0f0;">3</span>
<span class="t k" style="left:576.5px;top:1235.2px;font-size:15px;color:#f0f0f0;letter-spacing:0.060px;">Sortie de l'application</span>
<span class="t k" style="left:737px;top:1235.2px;font-size:15px;color:#f0f0f0;">4</span>
<span class="t k" style="left:751.5px;top:1235.2px;font-size:15px;color:#f0f0f0;letter-spacing:0.068px;">Sortie de compilation</span>
<span class="t k" style="left:910px;top:1235.2px;font-size:15px;color:#f0f0f0;">5</span>
<span class="t k" style="left:925px;top:1235.2px;font-size:15px;color:#f0f0f0;letter-spacing:-0.160px;">QML Debugger Console</span>
<span class="t k" style="left:1100px;top:1235.2px;font-size:15px;color:#f0f0f0;">8</span>
<span class="t k" style="left:1114.5px;top:1235.2px;font-size:15px;color:#f0f0f0;letter-spacing:-0.059px;">Test Results</span>
<div style="left:397px;top:1238px;width:21px;height:13px;border-radius:7px;background:#2a5f9e"></div>
<span class="t" style="left:401.5px;top:1235.2px;font-size:10px;color:#ffffff;font-weight:bold;letter-spacing:0.438px;">10</span>
<svg style="left:1216px;top:1240px" width="7" height="10" viewBox="0 0 7 10"><path d="M3.500 0L7 4H0zM3.500 10L7 6H0z" fill="#e0e0e0"/></svg>
<div style="left:306px;top:213px;width:1140px;height:721px;border-radius:8px 0 0 0;box-shadow:0 3px 12px 3px rgba(0,0,0,.6),0 0 0 1px rgba(0,0,0,.4);background:#ffffff"></div>
<div style="left:306px;top:213px;width:1140px;height:46px;border-radius:8px 0 0 0;background:linear-gradient(#e6e3e0,#dad6d2);border-bottom:1px solid #bdb6af;box-shadow:inset 0 1px 0 rgba(255,255,255,.8)"></div>
<div style="left:313px;top:220px;width:34px;height:32px;box-sizing:border-box;border:1px solid #dcd8d4;border-radius:6px;background:linear-gradient(#f7f6f5,#f1efed);box-shadow:0 1px 2px rgba(0,0,0,.12)"></div>
<svg style="left:322px;top:228px" width="16" height="16" viewBox="0 0 16 16"><rect x="1" y="1" width="14" height="14" rx="2" fill="none" stroke="#2e3436" stroke-width="2"/><path d="M8 4v8M4 8h8" stroke="#2e3436" stroke-width="2"/></svg>
<span class="t" style="left:882px;top:226.0px;font-size:15.2px;color:#2e3436;letter-spacing:0.187px;-webkit-text-stroke:0.5px;">raphael@Debian: ~/projetc</span>
<pre style="left:307px;top:263px;width:1124px;height:671px;overflow:hidden;font-size:15px;line-height:21px;color:#0c0c10;-webkit-text-stroke:0.25px"><span class="g">raphael@Debian</span>:<span class="b">~</span>$ ls
<span class="b">ajc</span>           <span class="rd">backup.tgz</span>                   <span class="b">Desktop</span>    ESSAI.TXT         <span class="g">maj2min.sh</span>      <span class="b">projetc</span>        <span class="b">Templates</span>        <span class="g">variable.sh</span>
<span class="g">argushell.sh</span>  <span class="b">Bibliotheques_livres</span>         <span class="b">Documents</span>  <span class="g">fonction.sh</span>       <span class="b">Music</span>           <span class="b">projethopital</span>  <span class="g">testefichier.sh</span>  <span class="b">Videos</span>
<span class="rd">backup1.tgz</span>   <span class="b">build-projetc-Desktop-Debug</span>  <span class="b">Downloads</span>  <span class="g">liste_fichier.sh</span>  notesperso.txt  <span class="b">Public</span>         TITI.TXT
<span class="g">backup.sh</span>     <span class="g">calculatrice.sh</span>              <span class="g">duree.sh</span>   LOG.TXT           <span class="b">Pictures</span>        TATA           <span class="g">utilisateur.sh</span>
<span class="g">raphael@Debian</span>:<span class="b">~</span>$ cd projetc
<span class="g">raphael@Debian</span>:<span class="b">~/projetc</span>$ ls
bibliotheque_sauvegarde_raphael.txt  <span class="g">exec</span>  executable  main.c  projetc.pro  projetc.pro.user
<span class="g">raphael@Debian</span>:<span class="b">~/projetc</span>$ cat bibliotheque_sauvegarde_raphael.txt
À la recherche du temps perdu | Albert Camus
Le bruit et la fureur | Gustave Flaubert
Madame Bovary | John Fante
La Divine Comédie | Léon Tolstoï
Demande à la poussière | William Faulkner
<span class="g">raphael@Debian</span>:<span class="b">~/projetc</span>$ rm bibliotheque_sauvegarde_raphael.txt
<span class="g">raphael@Debian</span>:<span class="b">~/projetc</span>$ ls
<span class="g">exec</span>  executable  main.c  projetc.pro  projetc.pro.user
<span class="g">raphael@Debian</span>:<span class="b">~/projetc</span>$ cat bibliotheque_sauvegarde_raphael.txt
cat: bibliotheque_sauvegarde_raphael.txt: Aucun fichier ou dossier de ce type
<span class="g">raphael@Debian</span>:<span class="b">~/projetc</span>$ cat bibliotheque_sauvegarde_raphael.txt
À la recherche du temps perdu | Albert Camus
Le bruit et la fureur | Gustave Flaubert
Madame Bovary | John Fante
La Divine Comédie | Léon Tolstoï
Demande à la poussière | William Faulkner
<span class="g">raphael@Debian</span>:<span class="b">~/projetc</span>$ cat bibliotheque_sauvegarde_raphael.txt
À la recherche du temps perdu | Albert Camus
Le bruit et la fureur | Gustave Flaubert
Madame Bovary | John Fante
La Divine Comédie | Léon Tolstoï
Demande à la poussière | William Faulkner
<span class="g">raphael@Debian</span>:<span class="b">~/projetc</span>$ </pre>
<div style="left:541px;top:912px;width:9px;height:21px;background:#000000;"></div>
<div style="left:1429px;top:48px;width:1px;height:1205px;background:rgba(128,128,128,.35)"></div><div style="left:1430px;top:48px;width:1px;height:1205px;background:rgba(128,128,128,.75)"></div>
</div></body></html>
